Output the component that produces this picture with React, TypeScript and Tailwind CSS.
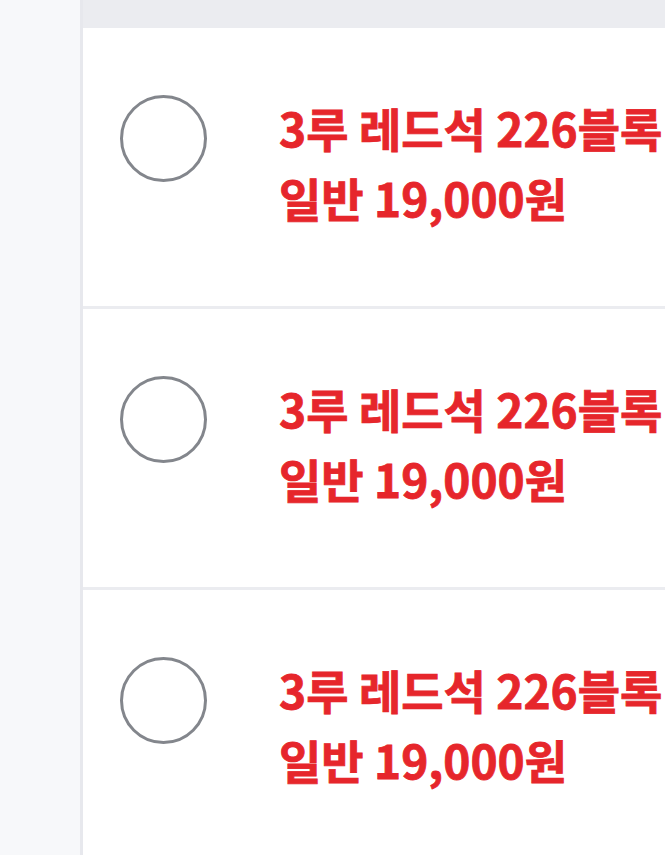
import React from "react";

function Option() {
  return (
    <div className="h-[278px] shrink-0 bg-white pl-[37px] pt-[64px] flex items-start overflow-hidden">
      <div className="mt-[3px] w-[87px] h-[87px] shrink-0 rounded-full border-[3px] border-[#83868c]" />
      <div
        className="ml-[72px] whitespace-nowrap font-bold text-[46px] leading-[70px] text-[#e6262b] [-webkit-text-stroke:0.8px_#e6262b]"
        style={{ fontFamily: '"Noto Sans CJK KR", "Noto Sans", sans-serif' }}
      >
        <div>3루 레드석 226블록</div>
        <div>일반 19,000원</div>
      </div>
    </div>
  );
}

export default function App() {
  return (
    <div className="w-[665px] h-[855px] flex overflow-hidden bg-[#f7f8fa]">
      <div className="w-[80px] shrink-0 bg-[#f7f8fa]" />
      <div className="w-[3px] shrink-0 bg-[#e7e8ed]" />
      <div className="flex-1 min-w-0 bg-[#ebecf0] pt-[28px] flex flex-col gap-[3px] overflow-hidden">
        <Option />
        <Option />
        <Option />
      </div>
    </div>
  );
}
